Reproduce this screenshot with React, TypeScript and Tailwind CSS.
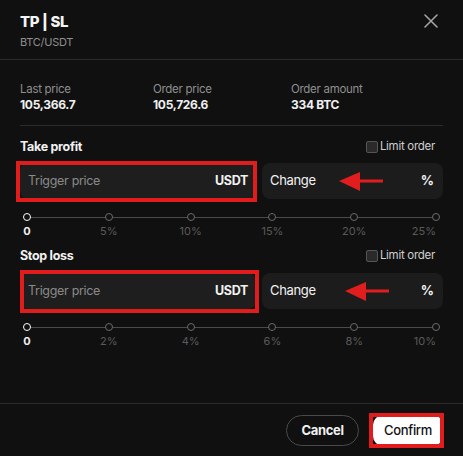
import React from "react";

const font = { fontFamily: "Inter, 'Liberation Sans', sans-serif" };

function Arrow({ x }: { x: number }) {
  return (
    <svg className="absolute left-0 top-0 pointer-events-none" width="180" height="36" viewBox="0 0 180 36">
      <polygon points={`${x},18 ${x + 21},9 ${x + 21},28`} fill="#e21d1d" />
      <rect x={x + 18} y={16.5} width={26} height={3} fill="#e21d1d" />
    </svg>
  );
}

function Slider({ labels }: { labels: string[] }) {
  return (
    <div className="mx-[3px]">
      <div className="relative flex h-2 items-center justify-between">
        <div className="absolute left-1 right-1 top-[3.5px] h-px bg-[#4a4a4a]" />
        {labels.map((l, i) => (
          <div
            key={l}
            className={
              i === 0
                ? "relative h-2 w-2 rounded-full border-[1.5px] border-white bg-[#111]"
                : "relative h-2 w-2 rounded-full border-[1.5px] border-[#6a6a6a] bg-[#111]"
            }
          />
        ))}
      </div>
      <div className="mt-[3px] flex h-[14px] justify-between px-1 text-[11px] leading-[14px]">
        {labels.map((l, i) => (
          <div
            key={l}
            className={
              i === labels.length - 1
                ? "flex w-0 justify-end whitespace-nowrap text-[#5a5a5a]"
                : "flex w-0 justify-center whitespace-nowrap " +
                  (i === 0 ? "font-bold text-[#eeeeee]" : "text-[#5a5a5a]")
            }
          >
            {l}
          </div>
        ))}
      </div>
    </div>
  );
}

function Section({
  title,
  labels,
  redTop,
  arrowX,
  mtInput,
  redClass,
}: {
  title: string;
  labels: string[];
  redTop: string;
  arrowX: number;
  mtInput: string;
  redClass: string;
}) {
  return (
    <div>
      <div className="flex h-4 items-center justify-between">
        <span className="text-[12.5px] font-bold tracking-tight text-[#f2f2f2]">{title}</span>
        <label className="mr-[8px] flex items-center gap-[2px] text-[11.5px] tracking-tight text-[#cfcfcf]">
          <span className="h-[12px] w-[12px] rounded-[2px] border border-[#555] bg-[#2a2a2a]" />
          Limit order
        </label>
      </div>
      <div className={`${mtInput} flex h-9 gap-[6px]`}>
        <div className="relative flex w-[236px] items-center justify-between rounded-lg bg-[#1e1e1e] pl-2 pr-[8px]">
          <span className="text-[12.5px] tracking-tight text-[#8a8a8a]">Trigger price</span>
          <span className="text-[12.5px] font-bold tracking-tight text-[#f2f2f2]">USDT</span>
          <div className={`pointer-events-none absolute border-4 border-[#e01c1c] ${redClass}`} />
        </div>
        <div className="relative flex flex-1 items-center justify-between rounded-lg bg-[#1c1c1c] pl-2 pr-[9px]">
          <span className="text-[13px] tracking-tight text-[#f2f2f2]">Change</span>
          <span className="text-[13px] font-bold text-[#f2f2f2]">%</span>
          <Arrow x={arrowX} />
        </div>
      </div>
      <div className={redTop}>
        <Slider labels={labels} />
      </div>
    </div>
  );
}

export default function App() {
  return (
    <div style={font} className="flex h-[456px] w-[463px] flex-col overflow-hidden bg-[#101010] text-white">
      <div className="flex items-start justify-between border-b border-[#2b2b2b] px-5 pb-[10px] pt-[13px]">
        <div>
          <div className="text-[15px] font-extrabold leading-[18px] tracking-tight text-[#f4f4f4]">TP | SL</div>
          <div className="mt-[4px] text-[11px] leading-[14px] tracking-tight text-[#8f8f8f]">BTC/USDT</div>
        </div>
        <svg className="mr-[5px] mt-[1px]" width="14" height="14" viewBox="0 0 14 14">
          <path d="M1 1 L13 13 M13 1 L1 13" stroke="#a8a8a8" strokeWidth="1.5" strokeLinecap="round" />
        </svg>
      </div>

      <div className="flex flex-1 flex-col px-5">
        <div className="flex border-b border-[#2b2b2b] pb-3 pt-[21px]">
          <div className="w-[133px]">
            <div className="text-[11.5px] leading-4 tracking-tight text-[#8f8f8f]">Last price</div>
            <div className="text-[12px] font-bold leading-4 tracking-tight text-[#f0f0f0]">105,366.7</div>
          </div>
          <div className="w-[138px]">
            <div className="text-[11.5px] leading-4 tracking-tight text-[#8f8f8f]">Order price</div>
            <div className="text-[12px] font-bold leading-4 tracking-tight text-[#f0f0f0]">105,726.6</div>
          </div>
          <div>
            <div className="text-[11.5px] leading-4 tracking-tight text-[#8f8f8f]">Order amount</div>
            <div className="text-[12px] font-bold leading-4 tracking-tight text-[#f0f0f0]">334 BTC</div>
          </div>
        </div>

        <div className="mt-[13px]">
          <Section
            title="Take profit"
            labels={["0", "5%", "10%", "15%", "20%", "25%"]}
            redTop="mt-[14px]"
            arrowX={77}
            mtInput="mt-2"
            redClass="-left-1 -right-[1px] -top-[2px] -bottom-[3px]"
          />
        </div>
        <div className="mt-[10px]">
          <Section
            title="Stop loss"
            labels={["0", "2%", "4%", "6%", "8%", "10%"]}
            redTop="mt-[14px]"
            arrowX={83}
            mtInput="mt-[9px]"
            redClass="left-0 -right-[3px] -top-[3px] -bottom-1"
          />
        </div>
      </div>

      <div className="flex h-[53px] shrink-0 items-start justify-end gap-[14px] border-t border-[#2b2b2b] pr-[20px] pt-[11px]">
        <button className="h-[31px] w-[73px] rounded-full border border-[#4a4a4a] text-[13px] font-bold tracking-tight text-[#f2f2f2]">
          Cancel
        </button>
        <div className="relative h-[31px]">
          <button className="h-[31px] w-[70px] rounded-[10px] bg-white text-[13px] font-medium tracking-tight text-[#111]">
            Confirm
          </button>
          <div className="pointer-events-none absolute -left-1 -right-[1px] -top-[2px] -bottom-[2px] border-4 border-[#e01c1c]" />
        </div>
      </div>
    </div>
  );
}
